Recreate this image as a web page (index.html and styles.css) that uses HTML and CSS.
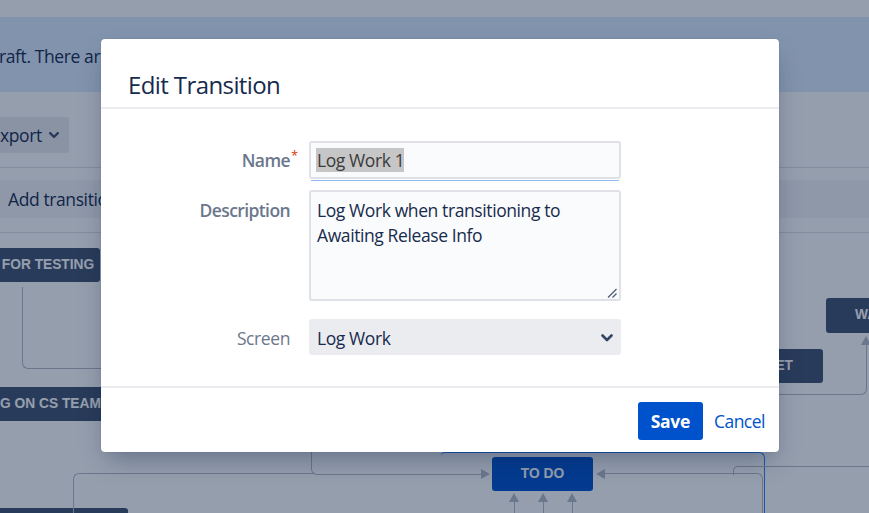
FILE: index.html
```html
<!DOCTYPE html>
<html lang="en">
<head>
<meta charset="utf-8">
<title>Edit Transition</title>
<link rel="stylesheet" href="styles.css">
</head>
<body>
<div class="page">
  <div class="topbar"></div>
  <div class="banner"><p class="banner-text">raft. There are unpublished changes to this workflow.</p></div>
  <div class="toolbar">
    <button class="tool-btn">xport
      <svg class="tool-chev" width="10" height="7" viewBox="0 0 10 7"><path d="M1.2 1.2 L5 5 L8.8 1.2" fill="none" stroke="#42526e" stroke-width="2.4" stroke-linecap="round" stroke-linejoin="round"/></svg>
    </button>
  </div>
  <div class="actions">
    <div class="action-bar"><span class="action-text">Add transition</span></div>
  </div>
  <div class="diagram">
    <div class="node node-testing">FOR TESTING</div>
    <div class="node node-cs">G ON CS TEAM</div>
    <div class="node node-bottom"></div>
    <div class="node node-todo">TO DO</div>
    <div class="node node-et">KET</div>
    <div class="node node-wa">WA</div>

    <div class="edge e-left"></div>
    <div class="edge e-bottom"></div>
    <div class="edge e-mid"></div>
    <div class="edge e-blue"></div>
    <div class="edge e-right"></div>
    <div class="edge e-right2"></div>
    <div class="edge e-wa"></div>

    <span class="arrow-r a-todo-l"></span>
    <span class="arrow-l a-todo-r"></span>
    <span class="arrow-u a-up1"></span>
    <span class="arrow-u a-up2"></span>
    <span class="arrow-u a-up3"></span>
    <span class="stem s1"></span>
    <span class="stem s2"></span>
    <span class="stem s3"></span>
    <span class="arrow-u a-wa"></span>
  </div>
</div>
<div class="blanket"></div>

<section class="dialog">
  <header class="dlg-head"><h2 class="dlg-title">Edit Transition</h2></header>
  <div class="dlg-body">
    <div class="form">
      <label class="lbl lbl-strong lbl-name">Name<span class="req">*</span></label>
      <div class="field field-name"><span class="selected">Log Work 1</span></div>

      <label class="lbl lbl-strong lbl-desc">Description</label>
      <div class="field field-area">Log Work when transitioning to<br>Awaiting Release Info
        <svg class="grip" width="10" height="10" viewBox="0 0 10 10"><path d="M9.5 1 L1 9.5 M9.5 5.5 L5.5 9.5" stroke="#505f79" stroke-width="1.3" fill="none"/></svg>
      </div>

      <label class="lbl lbl-screen">Screen</label>
      <div class="select">Log Work
        <svg class="sel-chev" width="12" height="8" viewBox="0 0 12 8"><path d="M1.5 1.5 L6 6 L10.5 1.5" fill="none" stroke="#344563" stroke-width="2.6" stroke-linecap="round" stroke-linejoin="round"/></svg>
      </div>
    </div>
  </div>
  <footer class="dlg-foot">
    <button class="btn-save">Save</button>
    <button class="btn-cancel">Cancel</button>
  </footer>
</section>
</body>
</html>
```
FILE: styles.css
```css
html, body {
  margin: 0;
  padding: 0;
}
body {
  width: 869px;
  height: 513px;
  overflow: hidden;
  position: relative;
  background: #fff;
  font-family: "Open Sans", "Noto Sans", sans-serif;
  letter-spacing: -0.4px;
  color: #172b4d;
}

.page {
  display: flex;
  flex-direction: column;
  height: 513px;
  overflow: hidden;
}
.topbar {
  height: 17px;
  flex: none;
  background: #fff;
}
.banner {
  height: 75px;
  flex: none;
  background: #deebff;
  display: flex;
  align-items: center;
}
.banner-text {
  margin: 0 0 0 -1px;
  font-size: 17.5px;
  line-height: 24px;
  white-space: nowrap;
  padding-top: 3px;
}
.toolbar {
  height: 76px;
  flex: none;
  box-sizing: border-box;
  padding-top: 25px;
  border-bottom: 1px solid #dfe1e6;
}
.tool-btn {
  display: flex;
  align-items: center;
  height: 36px;
  width: 69px;
  box-sizing: border-box;
  border: 0;
  border-radius: 0 3px 3px 0;
  background: #ebecf0;
  padding: 0;
  font-family: inherit;
  letter-spacing: inherit;
  font-size: 17.5px;
  color: #172b4d;
}
.tool-chev {
  margin-left: 7px;
}
.actions {
  height: 65px;
  flex: none;
  border-bottom: 1px solid #dfe1e6;
  padding-top: 12px;
  box-sizing: border-box;
}
.action-bar {
  height: 38px;
  background: #f4f5f7;
  display: flex;
  align-items: center;
  padding-left: 8px;
}
.action-text {
  font-size: 17.5px;
  white-space: nowrap;
}

.diagram {
  position: relative;
  flex: 1;
}
.node {
  position: absolute;
  height: 34px;
  line-height: 34px;
  background: #42526e;
  color: #fff;
  border-radius: 3px;
  font-family: "Liberation Sans", Arial, sans-serif;
  font-weight: 700;
  font-size: 13.75px;
  letter-spacing: 0;
  white-space: nowrap;
  overflow: hidden;
}
.node-testing { left: -4px; top: 15px; width: 104px; text-align: center; }
.node-cs { left: -10px; top: 154px; width: 200px; padding-left: 10px; box-sizing: border-box; }
.node-bottom { left: -10px; top: 275px; width: 138px; }
.node-todo { left: 492px; top: 224px; width: 101px; text-align: center; background: #0052cc; }
.node-et { left: 700px; top: 116px; width: 123px; text-align: right; padding-right: 30px; box-sizing: border-box; }
.node-wa { left: 826px; top: 65px; width: 43px; height: 35px; padding-left: 29px; box-sizing: border-box; border-radius: 3px 0 0 3px; }

.edge {
  position: absolute;
  border: 0 solid #b3bac5;
  box-sizing: border-box;
}
.e-left { left: 22px; top: 54px; width: 120px; height: 82px; border-left-width: 1.5px; border-bottom-width: 1.5px; border-bottom-left-radius: 6px; }
.e-bottom { left: 73px; top: 240px; width: 240px; height: 50px; border-left-width: 1.5px; border-top-width: 1.5px; border-top-left-radius: 6px; }
.e-mid { left: 311px; top: 200px; width: 172px; height: 41.5px; border-left-width: 1.5px; border-bottom-width: 1.5px; border-bottom-left-radius: 6px; }
.e-blue { left: 441px; top: 219px; width: 324px; height: 70px; border-color: #2684ff; border-top-width: 1.5px; border-right-width: 1.5px; border-top-left-radius: 4px; border-top-right-radius: 6px; }
.e-right { left: 604px; top: 240px; width: 159px; height: 50px; border-top-width: 1.5px; border-right-width: 1.5px; border-top-right-radius: 6px; }
.e-right2 { left: 733px; top: 233px; width: 136px; height: 9px; border-top-width: 1.5px; border-left-width: 1.5px; border-top-left-radius: 5px; }
.e-wa { left: 700px; top: 112px; width: 167px; height: 50px; border-right-width: 1.5px; border-bottom-width: 1.5px; border-bottom-right-radius: 6px; }

.arrow-r, .arrow-l, .arrow-u {
  position: absolute;
  width: 0;
  height: 0;
}
.arrow-r {
  border-top: 5px solid transparent;
  border-bottom: 5px solid transparent;
  border-left: 9px solid #b3bac5;
}
.arrow-l {
  border-top: 5px solid transparent;
  border-bottom: 5px solid transparent;
  border-right: 9px solid #b3bac5;
}
.arrow-u {
  border-left: 5px solid transparent;
  border-right: 5px solid transparent;
  border-bottom: 9px solid #b3bac5;
}
.a-todo-l { left: 481px; top: 236px; }
.a-todo-r { left: 596px; top: 236px; }
.a-up1 { left: 509px; top: 260px; }
.a-up2 { left: 538px; top: 260px; }
.a-up3 { left: 567px; top: 260px; }
.a-wa { left: 861px; top: 103px; }
.stem {
  position: absolute;
  top: 268px;
  width: 1.5px;
  height: 12px;
  background: #b3bac5;
}
.s1 { left: 513.5px; }
.s2 { left: 542.5px; }
.s3 { left: 571.5px; }

.blanket {
  position: absolute;
  inset: 0;
  background: rgba(9, 30, 66, 0.43);
}

.dialog {
  position: absolute;
  left: 101px;
  top: 39px;
  width: 678px;
  background: #fff;
  border-radius: 4px;
  box-shadow: 0 12px 24px -6px rgba(9, 30, 66, 0.35), 0 0 1px rgba(9, 30, 66, 0.31);
  display: flex;
  flex-direction: column;
}
.dlg-head {
  height: 70px;
  box-sizing: border-box;
  padding: 31px 27px 0;
  border-bottom: 2px solid #ebecf0;
}
.dlg-title {
  margin: 0;
  font-size: 24px;
  line-height: 30px;
  font-weight: 400;
  letter-spacing: -0.6px;
  color: #172b4d;
}
.dlg-body {
  padding: 32px 0 31px;
  border-bottom: 2px solid #ebecf0;
}
.form {
  display: grid;
  grid-template-columns: 189px 312px;
  column-gap: 19px;
  align-items: start;
}
.lbl {
  text-align: right;
  font-size: 17.5px;
  line-height: 24px;
  color: #6b778c;
  position: relative;
  justify-self: end;
}
.lbl-strong { font-weight: 600; letter-spacing: -0.6px; }
.lbl-name { padding-top: 7px; }
.lbl-desc { padding-top: 8px; }
.lbl-screen { padding-top: 7px; }
.req {
  position: absolute;
  left: 100%;
  top: 8px;
  margin-left: 1px;
  font-size: 13px;
  line-height: 13px;
  font-weight: 400;
  color: #de350b;
}
.field {
  box-sizing: border-box;
  border: 2px solid #dfe1e6;
  border-radius: 3px;
  background: #fafbfc;
  font-size: 17.5px;
  color: #172b4d;
  position: relative;
}
.field-name {
  height: 38px;
  padding: 5px 6px;
  line-height: 24px;
  margin-bottom: 11px;
}
.field-name::after {
  content: "";
  position: absolute;
  left: 0;
  right: 0;
  bottom: -4px;
  height: 1px;
  background: #8fbaf5;
}
.selected {
  background: #c6c6c6;
  color: #3b3b3b;
  padding: 0 0 0 1px;
  margin-left: -1px;
}
.field-area {
  height: 111px;
  padding: 6px 6px;
  line-height: 25px;
  margin-bottom: 18px;
}
.grip {
  position: absolute;
  right: 2px;
  bottom: 1px;
}
.select {
  height: 36px;
  box-sizing: border-box;
  border-radius: 3px;
  background: #ebecf0;
  padding: 7px 8px 5px;
  line-height: 24px;
  font-size: 17.5px;
  color: #172b4d;
  position: relative;
}
.sel-chev {
  position: absolute;
  right: 8px;
  top: 15px;
}
.dlg-foot {
  height: 64px;
  box-sizing: border-box;
  padding: 14px 14px 12px;
  display: flex;
  justify-content: flex-end;
  align-items: flex-start;
  gap: 11px;
}
.btn-save {
  height: 38px;
  width: 65px;
  border: 0;
  border-radius: 3px;
  background: #0052cc;
  color: #fff;
  font-family: inherit;
  letter-spacing: -0.3px;
  font-weight: 700;
  font-size: 17.5px;
  padding: 0;
}
.btn-cancel {
  height: 38px;
  border: 0;
  background: none;
  color: #0052cc;
  font-family: inherit;
  letter-spacing: -0.5px;
  font-size: 17.5px;
  padding: 0;
}
```
